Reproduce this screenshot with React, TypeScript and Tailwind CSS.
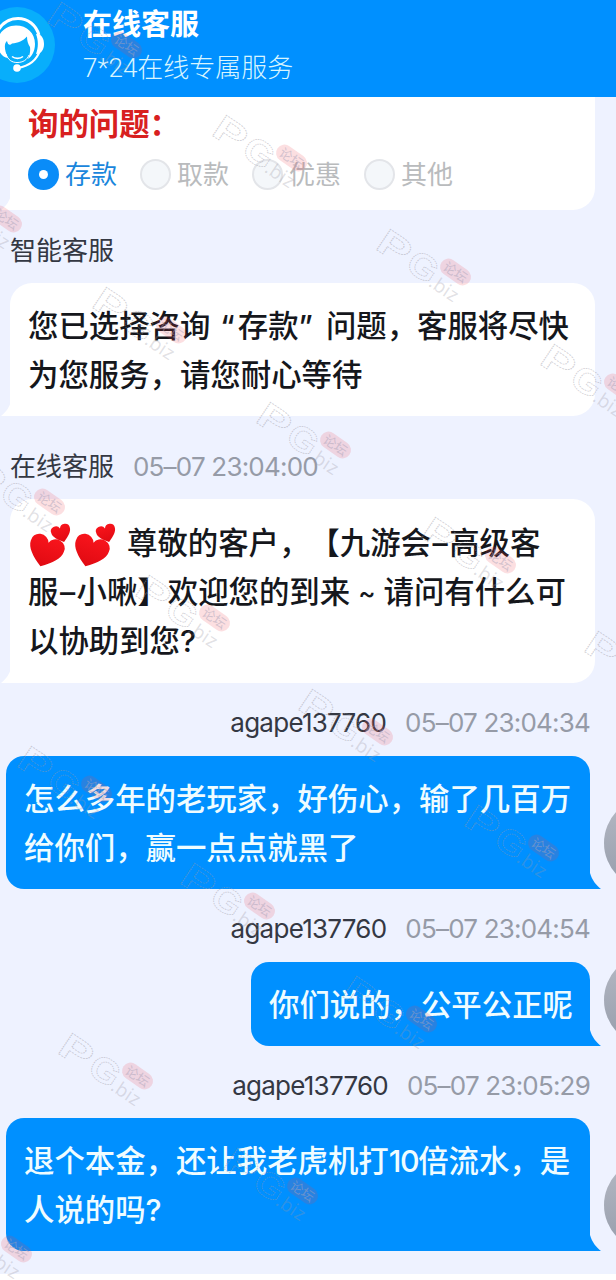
import type { ReactNode } from 'react';
import clsx from 'clsx';

const OPTIONS = ['存款', '取款', '优惠', '其他'];

// Tiled watermark positions on the page canvas
const WATERMARKS = [
  [47, -4], [212, 109], [376, 223], [-73, 170], [92, 281], [540, 338], [256, 396],
  [-30, 453], [421, 511], [135, 569], [584, 625], [298, 683], [17, 740], [464, 799],
  [180, 857], [342, 970], [58, 1027], [223, 1142], [-63, 1200],
];

export default function App() {
  return (
    <div className="relative flex h-[1280px] w-[616px] flex-col overflow-hidden bg-white font-['Inter','Noto_Sans_CJK_SC',sans-serif] text-[#15171c] [text-spacing-trim:space-all]">
      <Header />

      <main className="flex h-[1177px] flex-col bg-[#eef2ff]">
        {/* Question picker, scrolled under the header */}
        <section className="relative ml-[10px] h-[113px] w-[585px] rounded-br-[22px] bg-white pl-[18px]">
          <LeftTail />
          <h2 className="h-[54px] text-[30.4px] leading-[54px] font-bold text-[#d8201f]">询的问题：</h2>
          <div className="flex h-[46px] items-center">
            {OPTIONS.map((option, i) => (
              <RadioOption key={option} label={option} checked={i === 0} />
            ))}
          </div>
        </section>

        <Label name="智能客服" className="mt-[20px]" />
        <ServiceBubble className="mt-[13px] h-[133px] pt-[19px]">
          <Line>
            您已选择咨询<span className="mr-[3px] ml-[10px]">“</span>存款
            <span className="mr-[13px]">”</span>问题，客服将尽快
          </Line>
          <Line>为您服务，请您耐心等待</Line>
        </ServiceBubble>

        <Label name="在线客服" time="05–07 23:04:00" className="mt-[30px]" />
        <ServiceBubble className="mt-[13px] h-[184px] pt-[20px]">
          <Line>
            <Hearts />
            <Hearts />
            <span className="ml-[9px]">尊敬的客户，【九游会</span>
            <Dash />
            高级客
          </Line>
          <Line>
            服
            <Dash />
            小啾】欢迎您的到来<span className="mx-[8px] text-[26px]">~</span>请问有什么可
          </Line>
          <Line>以协助到您?</Line>
        </ServiceBubble>

        <Label name="agape137760" time="05–07 23:04:34" right className="mt-[19px]" />
        <UserMessage className="mt-[14px] h-[133px]" bubble="w-[584px] pt-[19px]">
          <Line>怎么多年的老玩家，好伤心，输了几百万</Line>
          <Line>给你们，赢一点点就黑了</Line>
        </UserMessage>

        <Label name="agape137760" time="05–07 23:04:54" right className="mt-[19px]" />
        <UserMessage className="mt-[14px] h-[84px]" bubble="w-[339px] pt-[19px]">
          <Line>你们说的，公平公正呢</Line>
        </UserMessage>

        <Label name="agape137760" time="05–07 23:05:29" right className="mt-[19px]" />
        <UserMessage className="mt-[13px] h-[133px]" bubble="w-[584px] pt-[19px]">
          <Line>
            退个本金，还让我老虎机打<span className="tracking-[-1.4px]">10</span>倍流水，是
          </Line>
          <Line>人说的吗?</Line>
        </UserMessage>
      </main>

      <div className="pointer-events-none absolute inset-0 overflow-hidden">
        {WATERMARKS.map(([x, y]) => (
          <Watermark key={`${x}-${y}`} x={x} y={y} />
        ))}
      </div>
    </div>
  );
}

function Header() {
  return (
    <header className="flex h-[97px] shrink-0 bg-[#0090ff] text-white">
      <svg className="h-[97px] w-[60px] shrink-0" viewBox="0 0 60 97" fill="none">
        <circle cx="17" cy="45" r="38" fill="#08aefb" />
        <path d="M-3 32C2 23 9 18.500 18 18.500C28 18.500 36 25 39 35" stroke="#fff" strokeWidth="3" />
        {/* Hair */}
        <path
          d="M-3 44C-2 32 6 25.500 16 25.500C27 25.500 35 33 35 44C35 52 31 57 28 59C30 54 30.500 51 30 47C28 44 27 41 27 36.500C23 41 18 43 12 43.500C10 46 8 45 7 41C4 43 4 50 8 58C3 58 -2 52 -3 44Z"
          fill="#fff"
        />
        <path d="M6 54C8 60 12 62.500 17 62.500C23 62.500 27 60 29 55" stroke="#fff" strokeWidth="1" />
        <path d="M36 34C42 34 44 39 44 44C44 50 41 54 36 54C38.500 47 38.500 41 36 34Z" fill="#fff" />
        <path d="M40 50C37 60 29 66 18 68" stroke="#fff" strokeWidth="2.200" />
        <path d="M12 56.500C15 59 20 59 23 56.500" stroke="#fff" strokeWidth="1.600" />
        <circle cx="17" cy="68" r="3.800" fill="#fff" />
      </svg>
      <div className="pl-[23px]">
        <h1 className="mt-[5px] text-[29px] leading-[40px] font-bold">在线客服</h1>
        <p className="mt-[4px] text-[26px] leading-[38px] font-light whitespace-nowrap text-[#d8f5ff]">
          <span className="font-['Roboto']">7*24</span>在线专属服务
        </p>
      </div>
    </header>
  );
}

function RadioOption({ label, checked }: { label: string; checked: boolean }) {
  return (
    <div className="flex w-[112px] items-center gap-[6px]">
      <span
        className={clsx(
          'flex size-[31px] items-center justify-center rounded-full',
          checked ? 'bg-[#0a8cf8]' : 'border-2 border-[#e3e5e9] bg-[#f4f7fa]',
        )}
      >
        {checked && <span className="size-[9px] rounded-full bg-white" />}
      </span>
      <span className={clsx('pt-[2px] text-[26px] leading-[38px]', checked ? 'text-[#1a86dc]' : 'text-[#b9bbbd]')}>
        {label}
      </span>
    </div>
  );
}

function Label({
  name,
  time,
  right,
  className,
}: {
  name: string;
  time?: string;
  right?: boolean;
  className: string;
}) {
  return (
    <div
      className={clsx(
        'flex h-[40px] shrink-0 items-center gap-[19px] text-[26px] whitespace-nowrap',
        right ? 'justify-end pr-[26px]' : 'pl-[10px]',
        className,
      )}
    >
      <span className={clsx('text-[#343843]', right && 'tracking-[-0.75px]')}>{name}</span>
      {time && <span className="tracking-[-0.8px] text-[#969ba7]">{time}</span>}
    </div>
  );
}

function Line({ children }: { children: ReactNode }) {
  return (
    <p className="flex h-[49px] items-center text-[30.4px] leading-[49px] font-medium whitespace-pre">{children}</p>
  );
}

function Dash() {
  return <span className="mx-[1.5px]">–</span>;
}

function ServiceBubble({ className, children }: { className: string; children: ReactNode }) {
  return (
    <section
      className={clsx(
        'relative ml-[10px] w-[585px] shrink-0 rounded-t-[22px] rounded-br-[22px] bg-white pl-[18px]',
        className,
      )}
    >
      <LeftTail />
      {children}
    </section>
  );
}

function LeftTail() {
  return (
    <svg className="absolute bottom-0 -left-[9px] h-[16px] w-[10px]" viewBox="0 0 10 16">
      <path d="M10 0C9 7 5 12 0 16H10Z" fill="#fff" />
    </svg>
  );
}

function UserMessage({
  className,
  bubble,
  children,
}: {
  className: string;
  bubble: string;
  children: ReactNode;
}) {
  return (
    <div className={clsx('flex w-[616px] shrink-0 items-end justify-end', className)}>
      <section
        className={clsx(
          'relative h-full shrink-0 rounded-t-[18px] rounded-bl-[18px] bg-[#0090ff] pl-[18px] text-[#effcff]',
          bubble,
        )}
      >
        {children}
        <svg className="absolute -right-[11px] bottom-0 h-[16px] w-[12px]" viewBox="0 0 12 16">
          <path d="M0 0H1C3 7 7 12 12 16H0Z" fill="#0090ff" />
        </svg>
      </section>
      <span className="mr-[-80px] ml-[14px] size-[92px] shrink-0 rounded-full bg-linear-to-b from-[#b5b9c4] to-[#969dab]" />
    </div>
  );
}

function Hearts() {
  const heart = 'M0 11C-7 6 -11.500 1 -11.500 -4A5.900 5.900 0 0 1 0 -6.500A5.900 5.900 0 0 1 11.500 -4C11.500 1 7 6 0 11Z';
  return (
    <svg className="mt-[4px] mr-[2px] h-[44px] w-[43px] shrink-0 overflow-visible" viewBox="0 0 43 44">
      <defs>
        <linearGradient id="heart" x1="0" y1="0" x2="0" y2="1">
          <stop offset="0" stopColor="#f8141c" />
          <stop offset="1" stopColor="#e00a12" />
        </linearGradient>
      </defs>
      <path d={heart} transform="translate(17.500 27.500) rotate(19) scale(1.520 1.420)" fill="url(#heart)" />
      <path d={heart} transform="translate(33.500 9.500) rotate(-17) scale(0.840 0.800)" fill="url(#heart)" />
    </svg>
  );
}

function Watermark({ x, y }: { x: number; y: number }) {
  return (
    <svg className="absolute h-[84px] w-[104px] overflow-visible" style={{ left: x, top: y }} viewBox="0 0 104 84">
      <g
        transform="translate(0 24) rotate(34)"
        fontFamily="Liberation Sans"
        fontWeight="bold"
        fill="none"
        stroke="#9a98a4"
        strokeOpacity="0.45"
        strokeWidth="0.9"
        strokeDasharray="1.500 0.800"
      >
        <text x="-1" y="2" fontSize="36" textLength="33" lengthAdjust="spacingAndGlyphs">P</text>
        <text x="35" y="2" fontSize="35" textLength="30" lengthAdjust="spacingAndGlyphs">G</text>
        <text
          x="64"
          y="3"
          fontFamily="Open Sans"
          fontWeight="normal"
          fontSize="19"
          fill="#9a98a4"
          fillOpacity="0.3"
          stroke="none"
          textLength="31"
        >
          .biz
        </text>
      </g>
      <g transform="translate(79.500 49) rotate(35)">
        <rect x="-17" y="-8.500" width="34" height="17" rx="8.500" fill="#f04350" fillOpacity="0.17" />
        <text
          y="5"
          textAnchor="middle"
          fontFamily="Noto Sans CJK SC"
          fontSize="13"
          fill="#a9a2b8"
          fillOpacity="0.5"
        >
          论坛
        </text>
      </g>
    </svg>
  );
}
